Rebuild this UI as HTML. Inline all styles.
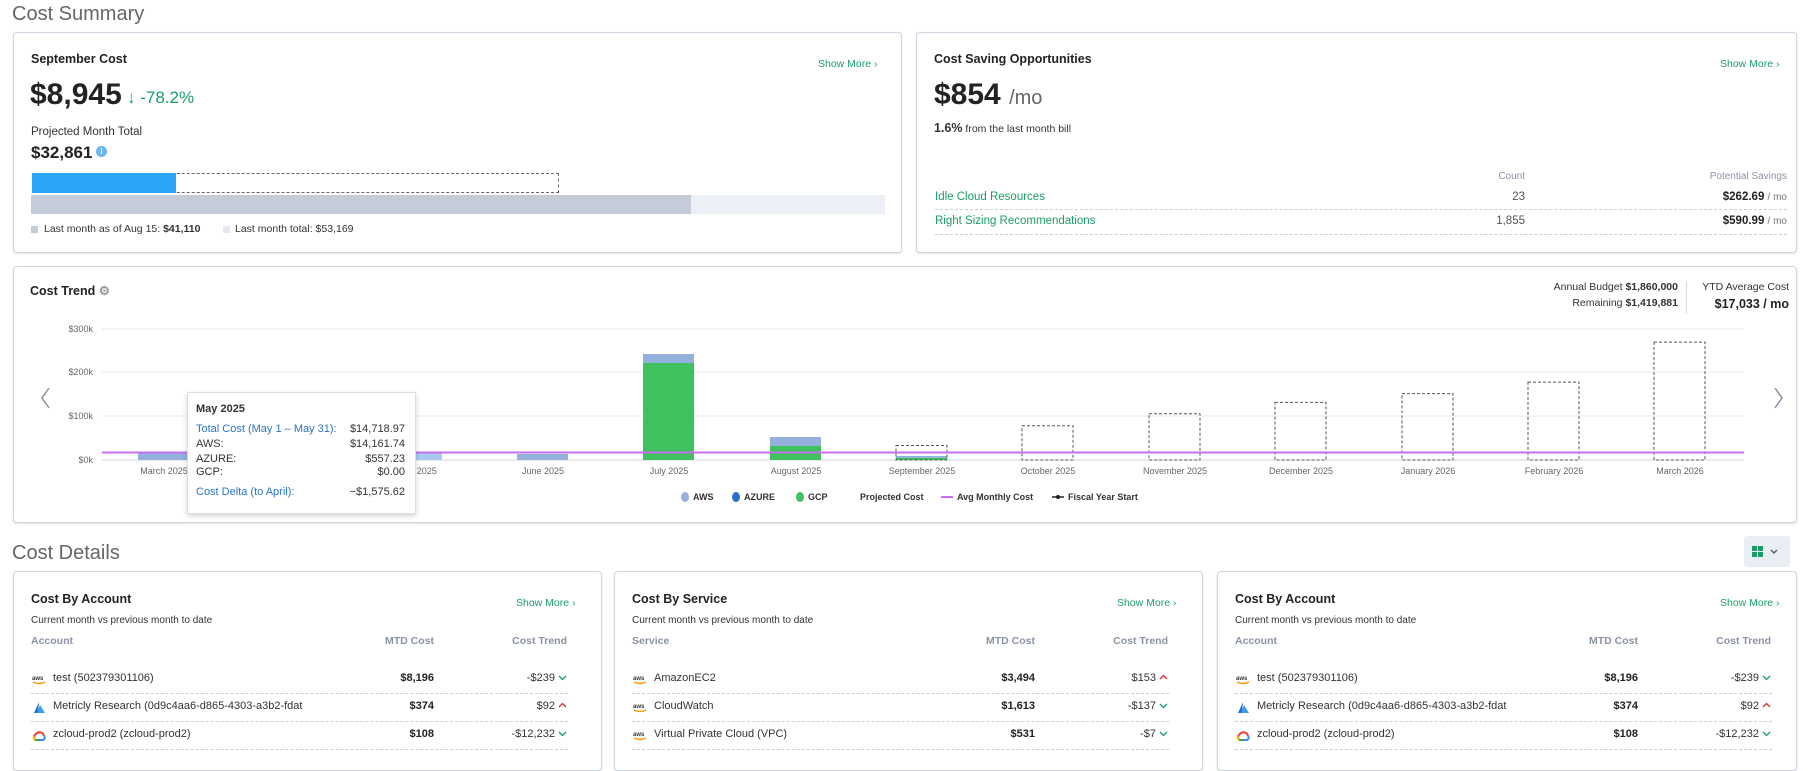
<!DOCTYPE html>
<html><head><meta charset="utf-8"><style>
*{box-sizing:border-box;margin:0;padding:0}
body{width:1811px;height:756px;overflow:hidden;background:#fff;font-family:"Liberation Sans",sans-serif;color:#222;position:relative}
.a{position:absolute;white-space:nowrap}
.card{position:absolute;border:1px solid #cfd5e0;border-radius:4px;background:#fff;box-shadow:0 1px 2px rgba(0,0,0,.12)}
.h{font-size:20px;color:#666;font-weight:300}
.t{font-size:12.5px;font-weight:bold;color:#222}
.sm{font-size:10.5px;color:#1a9e68}
.g{color:#1a9e68}
.dash{position:absolute;border-top:1px dashed #c9ced8;height:0}
.hd{font-size:10.5px;color:#8a93a6;font-weight:bold}
.row{font-size:11px;color:#333}
.lab{font-size:9px;fill:#666;font-family:"Liberation Sans",sans-serif}
</style></head><body>
<div class="a h" style="left:12px;top:3px">Cost Summary</div>

<div class="card" style="left:13px;top:32px;width:889px;height:221px"></div>
<div class="a t" style="left:31px;top:52px">September Cost</div>
<div class="a sm" style="left:818px;top:58px">Show More ›</div>
<div class="a" style="left:30px;top:78px;font-size:30px;font-weight:bold">$8,945</div>
<div class="a g" style="left:127px;top:88px;font-size:17px">↓ -78.2%</div>
<div class="a" style="left:31px;top:126px;font-size:11.5px;color:#333">Projected Month Total</div>
<div class="a" style="left:31px;top:143px;font-size:17px;font-weight:bold">$32,861</div>
<div class="a" style="left:96px;top:146px;width:11px;height:11px;border-radius:50%;background:#6ab6f5;color:#fff;font-size:8px;text-align:center;line-height:11px;font-weight:bold">i</div>
<div class="a" style="left:32px;top:173px;width:527px;height:20px;border:1px dashed #666"></div>
<div class="a" style="left:32px;top:173px;width:144px;height:20px;background:#2ba6f6"></div>
<div class="a" style="left:31px;top:195px;width:854px;height:19px;background:#eceff5"></div>
<div class="a" style="left:31px;top:195px;width:660px;height:19px;background:#c5ccd9"></div>
<div class="a" style="left:31px;top:226px;width:7px;height:7px;background:#c5ccd9"></div>
<div class="a" style="left:44px;top:223px;font-size:10.5px;color:#333">Last month as of Aug 15: <b>$41,110</b></div>
<div class="a" style="left:223px;top:226px;width:7px;height:7px;background:#e6e9f0"></div>
<div class="a" style="left:235px;top:223px;font-size:10.5px;color:#333">Last month total: $53,169</div>

<div class="card" style="left:916px;top:32px;width:881px;height:221px"></div>
<div class="a t" style="left:934px;top:52px">Cost Saving Opportunities</div>
<div class="a sm" style="left:1720px;top:58px">Show More ›</div>
<div class="a" style="left:934px;top:78px;font-size:30px;font-weight:bold">$854 <span style="font-size:20px;font-weight:normal;color:#666">/mo</span></div>
<div class="a" style="left:934px;top:121px;font-size:10.5px;color:#333"><b style="font-size:12.5px">1.6%</b> from the last month bill</div>
<div class="a" style="left:1475px;top:171px;font-size:10px;color:#8a93a6;width:50px;text-align:right">Count</div>
<div class="a" style="left:1650px;top:171px;font-size:10px;color:#8a93a6;width:137px;text-align:right">Potential Savings</div>
<div class="a g" style="left:935px;top:191px;font-size:11.5px">Idle Cloud Resources</div>
<div class="a" style="left:1475px;top:191px;font-size:11.5px;color:#555;width:50px;text-align:right">23</div>
<div class="a" style="left:1650px;top:191px;font-size:11.5px;width:137px;text-align:right"><b>$262.69</b> <span style="font-size:10px;color:#777">/ mo</span></div>
<div class="dash" style="left:935px;top:209px;width:852px"></div>
<div class="a g" style="left:935px;top:215px;font-size:11.5px">Right Sizing Recommendations</div>
<div class="a" style="left:1475px;top:215px;font-size:11.5px;color:#555;width:50px;text-align:right">1,855</div>
<div class="a" style="left:1650px;top:215px;font-size:11.5px;width:137px;text-align:right"><b>$590.99</b> <span style="font-size:10px;color:#777">/ mo</span></div>
<div class="dash" style="left:935px;top:234px;width:852px"></div>

<div class="card" style="left:13px;top:266px;width:1784px;height:257px"></div>
<div class="a t" style="left:30px;top:283px">Cost Trend <span style="color:#999">⚙</span></div>
<div class="a" style="left:1478px;top:281px;width:200px;text-align:right;font-size:10.5px;color:#333">Annual Budget <b>$1,860,000</b></div>
<div class="a" style="left:1478px;top:297px;width:200px;text-align:right;font-size:10.5px;color:#333">Remaining <b>$1,419,881</b></div>
<div class="a" style="left:1686px;top:281px;width:1px;height:33px;background:#d5d9e0"></div>
<div class="a" style="left:1689px;top:281px;width:100px;text-align:right;font-size:10.5px;color:#333">YTD Average Cost</div>
<div class="a" style="left:1689px;top:297px;width:100px;text-align:right;font-size:12.5px;font-weight:bold">$17,033 / mo</div>

<svg class="a" style="left:0;top:0" width="1811" height="756">
<g stroke="#e8e8ec" stroke-width="1">
<line x1="102" y1="329" x2="1744" y2="329"/><line x1="102" y1="372" x2="1744" y2="372"/><line x1="102" y1="416" x2="1744" y2="416"/>
</g>
<line x1="102" y1="460" x2="1744" y2="460" stroke="#cfd5e0"/>
<text class="lab" x="93" y="332" text-anchor="end">$300k</text>
<text class="lab" x="93" y="375" text-anchor="end">$200k</text>
<text class="lab" x="93" y="419" text-anchor="end">$100k</text>
<text class="lab" x="93" y="463" text-anchor="end">$0k</text>
<path d="M49 388 L42 398 L49 408" fill="none" stroke="#8890a0" stroke-width="1.5"/>
<path d="M1775 388 L1782 398 L1775 408" fill="none" stroke="#8890a0" stroke-width="1.5"/>
<g fill="#94b1dc">
<rect x="138" y="453" width="51" height="7"/>
<rect x="264" y="454" width="51" height="6" fill="#e8edf5"/>
<rect x="391" y="453" width="51" height="7" fill="#a8c8f0"/>
<rect x="517" y="454" width="51" height="6"/>
<rect x="643" y="354" width="51" height="9"/>
<rect x="770" y="437" width="51" height="9"/>
<rect x="896" y="456" width="51" height="3"/>
</g>
<g fill="#3ec15e">
<rect x="643" y="363" width="51" height="97"/>
<rect x="770" y="446" width="51" height="14"/>
<rect x="896" y="458" width="51" height="2"/>
</g>
<g fill="none" stroke="#555" stroke-dasharray="3,2">
<rect x="896" y="445.5" width="51" height="14.5"/>
<rect x="1022" y="425.7" width="51" height="34.3"/>
<rect x="1149" y="413.8" width="51" height="46.2"/>
<rect x="1275" y="402.4" width="51" height="57.6"/>
<rect x="1402" y="393.6" width="51" height="66.4"/>
<rect x="1528" y="382.1" width="51" height="77.9"/>
<rect x="1654" y="342.1" width="51" height="117.9"/>
</g>
<line x1="102" y1="452.5" x2="1744" y2="452.5" stroke="#c86ef0" stroke-width="2"/>
<text class="lab" x="164" y="474" text-anchor="middle">March 2025</text>
<text class="lab" x="290" y="474" text-anchor="middle">April 2025</text>
<text class="lab" x="417" y="474" text-anchor="middle">May 2025</text>
<text class="lab" x="543" y="474" text-anchor="middle">June 2025</text>
<text class="lab" x="669" y="474" text-anchor="middle">July 2025</text>
<text class="lab" x="796" y="474" text-anchor="middle">August 2025</text>
<text class="lab" x="922" y="474" text-anchor="middle">September 2025</text>
<text class="lab" x="1048" y="474" text-anchor="middle">October 2025</text>
<text class="lab" x="1175" y="474" text-anchor="middle">November 2025</text>
<text class="lab" x="1301" y="474" text-anchor="middle">December 2025</text>
<text class="lab" x="1428" y="474" text-anchor="middle">January 2026</text>
<text class="lab" x="1554" y="474" text-anchor="middle">February 2026</text>
<text class="lab" x="1680" y="474" text-anchor="middle">March 2026</text>
<g font-family="Liberation Sans" font-size="9" font-weight="bold" fill="#333">
<ellipse cx="685" cy="497" rx="4" ry="5" fill="#94b1dc"/><text x="693" y="500">AWS</text>
<ellipse cx="736" cy="497" rx="4" ry="5" fill="#2a6fc9"/><text x="744" y="500">AZURE</text>
<ellipse cx="800" cy="497" rx="4" ry="5" fill="#3ec15e"/><text x="808" y="500">GCP</text>
<text x="860" y="500">Projected Cost</text>
<line x1="941" y1="497" x2="953" y2="497" stroke="#c86ef0" stroke-width="2"/><text x="957" y="500">Avg Monthly Cost</text>
<line x1="1052" y1="497" x2="1064" y2="497" stroke="#222" stroke-width="1.5"/><circle cx="1058" cy="497" r="2" fill="#222"/><text x="1068" y="500">Fiscal Year Start</text>
</g>
</svg>

<div class="a" style="left:187px;top:392px;width:229px;height:122px;background:#fff;border:1px solid #ddd;box-shadow:0 2px 5px rgba(0,0,0,.18);font-size:11px;color:#333">
<div class="a" style="left:8px;top:10px;font-weight:bold">May 2025</div>
<div class="a" style="left:8px;top:30px;color:#2a74c9">Total Cost (May 1 – May 31):</div><div class="a" style="right:10px;top:30px">$14,718.97</div>
<div class="a" style="left:8px;top:45px">AWS:</div><div class="a" style="right:10px;top:45px">$14,161.74</div>
<div class="a" style="left:8px;top:60px">AZURE:</div><div class="a" style="right:10px;top:60px">$557.23</div>
<div class="a" style="left:8px;top:73px">GCP:</div><div class="a" style="right:10px;top:73px">$0.00</div>
<div class="a" style="left:8px;top:93px;color:#2a74c9">Cost Delta (to April):</div><div class="a" style="right:10px;top:93px">−$1,575.62</div>
</div>

<div class="a h" style="left:12px;top:542px">Cost Details</div>
<div class="a" style="left:1744px;top:536px;width:46px;height:31px;background:#e9eef4;border-radius:3px"></div>
<svg class="a" style="left:1752px;top:545px" width="32" height="14"><g fill="#1a9e68"><rect x="0" y="1" width="5" height="5"/><rect x="6" y="1" width="5" height="5"/><rect x="0" y="7" width="5" height="5"/><rect x="6" y="7" width="5" height="5"/></g><path d="M19 5 L22 8 L25 5" fill="none" stroke="#555" stroke-width="1.3"/></svg>

<div class="card" style="left:13px;top:571px;width:589px;height:200px"></div>
<div class="card" style="left:614px;top:571px;width:589px;height:200px"></div>
<div class="card" style="left:1217px;top:571px;width:580px;height:200px"></div>

<div id="bc"></div>
<script>
const icons={
aws:'<svg width="14" height="12"><text x="0" y="6" font-size="6" font-family="Liberation Sans" font-weight="bold" fill="#333">aws</text><path d="M1 8 Q7 11 13 8" stroke="#f90" fill="none" stroke-width="1.4"/></svg>',
az:'<svg width="14" height="13"><path d="M7 1 L2 12 L6 12 Z" fill="#1f6fd0"/><path d="M8 4 L13 12 L5 12 Z" fill="#3c9cf0"/></svg>',
gcp:'<svg width="14" height="12"><path d="M3 10 A4 4 0 0 1 4 4 A4.5 4.5 0 0 1 12 6" stroke="#ea4335" stroke-width="2" fill="none"/><path d="M12 6 A2.5 2.5 0 0 1 11 10 L7 10" stroke="#4285f4" stroke-width="2" fill="none"/><path d="M3 10 L7 10" stroke="#34a853" stroke-width="2"/><path d="M3 10 A3 3 0 0 1 2 6" stroke="#fbbc05" stroke-width="2" fill="none"/></svg>'};
const up='<svg width="9" height="7"><path d="M1 5 L4.5 1.5 L8 5" fill="none" stroke="#e0283a" stroke-width="1.3"/></svg>';
const dn='<svg width="9" height="7"><path d="M1 2 L4.5 5.5 L8 2" fill="none" stroke="#1a9e68" stroke-width="1.3"/></svg>';
const cards=[
{x:13,t:'Cost By Account',c:'Account',rows:[['aws','test (502379301106)','$8,196','-$239',0],['az','Metricly Research (0d9c4aa6-d865-4303-a3b2-fdat','$374','$92',1],['gcp','zcloud-prod2 (zcloud-prod2)','$108','-$12,232',0]]},
{x:614,t:'Cost By Service',c:'Service',rows:[['aws','AmazonEC2','$3,494','$153',1],['aws','CloudWatch','$1,613','-$137',0],['aws','Virtual Private Cloud (VPC)','$531','-$7',0]]},
{x:1217,t:'Cost By Account',c:'Account',rows:[['aws','test (502379301106)','$8,196','-$239',0],['az','Metricly Research (0d9c4aa6-d865-4303-a3b2-fdat','$374','$92',1],['gcp','zcloud-prod2 (zcloud-prod2)','$108','-$12,232',0]]}];
let h='';
cards.forEach(c=>{const L=c.x;
h+=`<div class="a t" style="left:${L+18}px;top:592px">${c.t}</div>`;
h+=`<div class="a sm" style="left:${L+503}px;top:597px">Show More ›</div>`;
h+=`<div class="a" style="left:${L+18}px;top:615px;font-size:10px;color:#333">Current month vs previous month to date</div>`;
h+=`<div class="a hd" style="left:${L+18}px;top:635px">${c.c}</div>`;
h+=`<div class="a hd" style="left:${L+321}px;top:635px;width:100px;text-align:right">MTD Cost</div>`;
h+=`<div class="a hd" style="left:${L+454}px;top:635px;width:100px;text-align:right">Cost Trend</div>`;
c.rows.forEach((r,i)=>{const y=672+i*28;
h+=`<div class="a" style="left:${L+19}px;top:${y+1}px">${icons[r[0]]}</div>`;
h+=`<div class="a row" style="left:${L+40}px;top:${y}px">${r[1]}</div>`;
h+=`<div class="a row" style="left:${L+321}px;top:${y}px;width:100px;text-align:right;font-weight:bold;color:#222">${r[2]}</div>`;
h+=`<div class="a row" style="left:${L+444}px;top:${y}px;width:110px;text-align:right">${r[3]} ${r[4]?up:dn}</div>`;
h+=`<div class="dash" style="left:${L+18}px;top:${y+21}px;width:537px"></div>`;});
});
document.getElementById('bc').innerHTML=h;
</script>
</body></html>
